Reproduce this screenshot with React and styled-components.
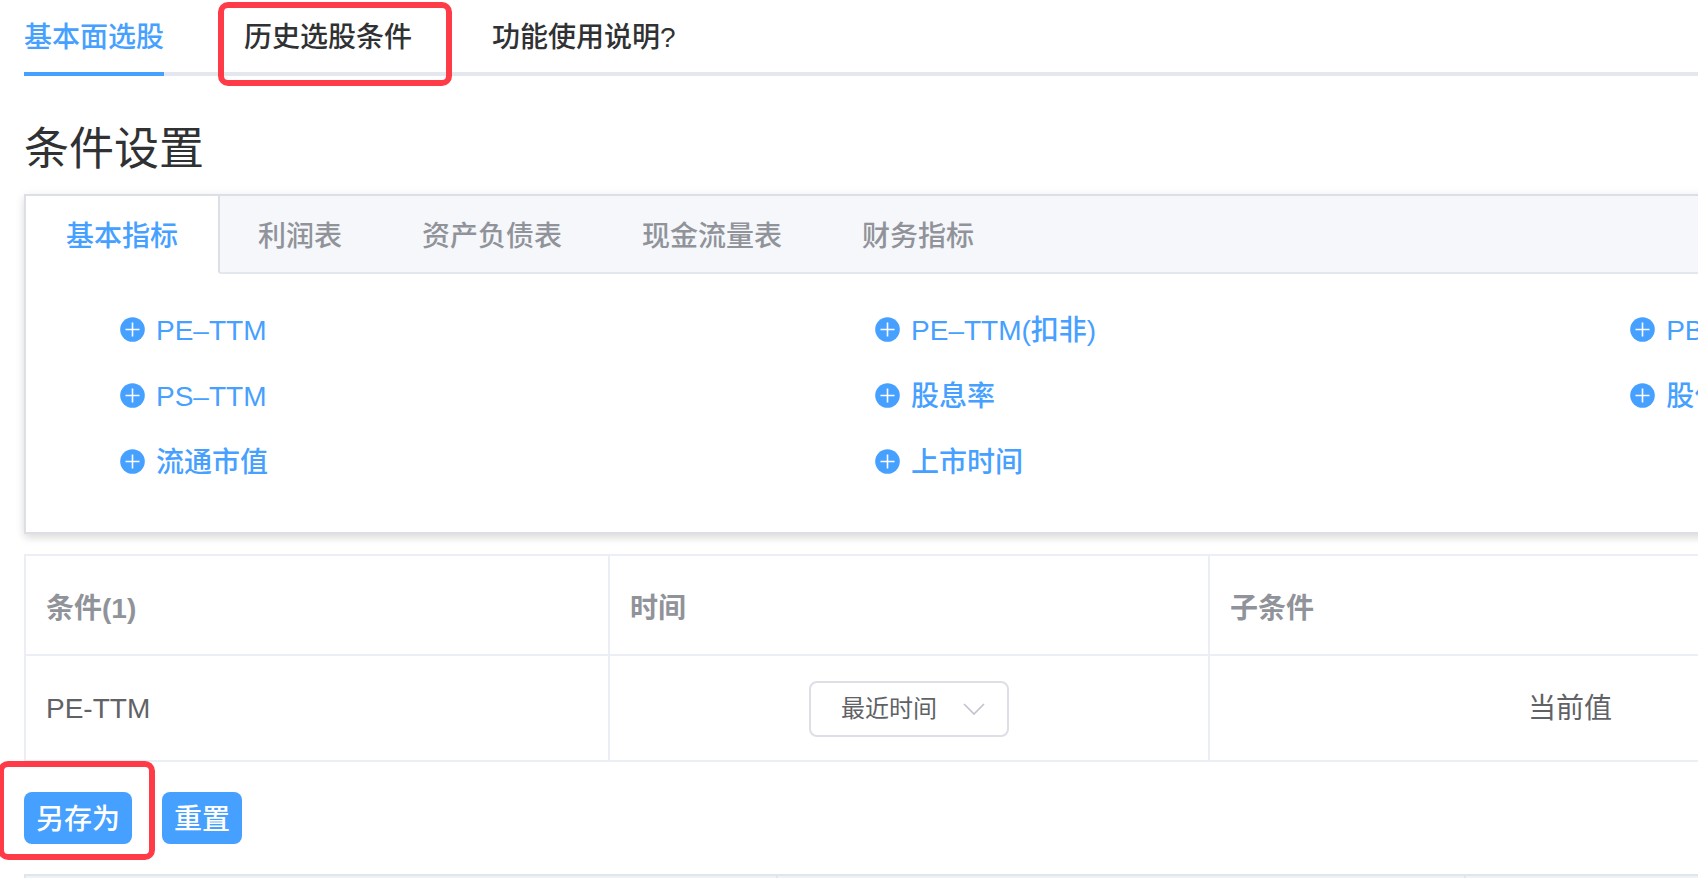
import React from "react";
import styled, { createGlobalStyle } from "styled-components";

const Global = createGlobalStyle`
  *, *::before, *::after { box-sizing: border-box; }
  body {
    margin: 0;
    background: #fff;
    color: #606266;
    font-family: "Liberation Sans", "Noto Sans CJK SC", sans-serif;
    font-size: 28px;
    line-height: 40px;
    overflow: hidden;
  }
  button, select { font: inherit; }
`;

const Viewport = styled.div`
  height: 100vh;
  overflow: hidden;
`;

const Page = styled.main`
  width: 140%;
  padding: 0 24px;
`;

const NavTabs = styled.nav`
  display: flex;
  gap: 80px;
  border-bottom: 4px solid #e4e7ed;
`;

const NavTab = styled.a`
  position: relative;
  padding: 18px 0 14px;
  color: ${(p) => (p.$active ? "#46a0ff" : "#303133")};
  font-weight: 500;
  text-decoration: none;
  border-bottom: 4px solid ${(p) => (p.$active ? "#46a0ff" : "transparent")};
  margin-bottom: -4px;
`;

const Highlight = styled.span`
  position: absolute;
  inset: ${(p) => p.$inset};
  border: 6px solid #ff3b47;
  border-radius: 10px;
  pointer-events: none;
`;

const Title = styled.h1`
  margin: 42px 0 12px;
  color: #303133;
  font-size: 45px;
  font-weight: 400;
  line-height: 64px;
`;

const Card = styled.section`
  border: 2px solid #dcdfe6;
  background: #fff;
  box-shadow: 0 4px 8px rgba(0, 0, 0, 0.12), 0 0 12px rgba(0, 0, 0, 0.04);
`;

const CardTabs = styled.div`
  display: flex;
  background: #f5f7fa;
  border-bottom: 2px solid #e4e7ed;
`;

const CardTab = styled.button`
  padding: 21px 40px 15px;
  border: 0;
  margin-bottom: -2px;
  background: ${(p) => (p.$active ? "#fff" : "transparent")};
  border-right: ${(p) => (p.$active ? "2px solid #dcdfe6" : "0")};
  border-bottom: 2px solid ${(p) => (p.$active ? "#fff" : "transparent")};
  color: ${(p) => (p.$active ? "#46a0ff" : "#909399")};
  font-weight: 500;
  margin-right: ${(p) => (p.$active ? "-2px" : "0")};
`;

const Indicators = styled.div`
  display: grid;
  grid-template-columns: repeat(3, 1fr);
  padding: 22px 30px 38px;
`;

const Indicator = styled.button`
  display: flex;
  align-items: center;
  gap: 11px;
  height: 66px;
  padding: 0 64px;
  border: 0;
  background: none;
  color: #46a0ff;
  font-weight: 500;
`;

const IndicatorLabel = styled.span`
  padding-top: 3px;
`;

const ConditionTable = styled.table`
  width: 100%;
  margin-top: 20px;
  table-layout: fixed;
  border-spacing: 0;
  border-top: 2px solid #ebeef5;
  border-left: 2px solid #ebeef5;
`;

const Col = styled.col`
  width: ${(p) => p.$width};
`;

const HeadCell = styled.th`
  height: 100px;
  padding: 8px 20px 0;
  border-right: 2px solid #ebeef5;
  border-bottom: 2px solid #ebeef5;
  color: #909399;
  font-weight: 700;
  text-align: left;
`;

const Cell = styled.td`
  height: 106px;
  padding: 2px 20px 0;
  border-right: 2px solid #ebeef5;
  border-bottom: 2px solid #ebeef5;
  text-align: ${(p) => p.$align || "left"};
`;

const SelectBox = styled.span`
  position: relative;
  display: inline-flex;
  align-items: center;
  vertical-align: middle;
`;

const Select = styled.select`
  appearance: none;
  width: 200px;
  height: 56px;
  padding: 0 60px 0 30px;
  border: 2px solid #dcdfe6;
  border-radius: 8px;
  background: #fff;
  color: #606266;
  font-size: 24px;
`;

const Chevron = styled.svg`
  position: absolute;
  right: 24px;
  pointer-events: none;
`;

const Actions = styled.div`
  display: flex;
  gap: 30px;
  padding: 30px 0;
`;

const ActionSlot = styled.div`
  position: relative;
`;

const ActionButton = styled.button`
  display: block;
  height: 52px;
  padding: 4px 12px 0;
  border: 0;
  border-radius: 8px;
  background: #46a0ff;
  color: #fff;
  font-weight: 500;
`;

const ResultTable = styled(ConditionTable)`
  margin-top: 0;
  border-color: #dfe6ec;
  background: #eef1f6;
`;

const ResultHead = styled(HeadCell)`
  border-color: #dfe6ec;
`;

const PlusCircle = () => (
  <svg width="25" height="25" viewBox="0 0 25 25" aria-hidden="true">
    <circle cx="12.5" cy="12.5" r="12.3" fill="#46a0ff" />
    <path d="M5.5 12.5h14M12.5 5.5v14" stroke="#fff" strokeWidth="1.6" />
  </svg>
);

const navTabs = ["基本面选股", "历史选股条件", "功能使用说明?"];
const cardTabs = ["基本指标", "利润表", "资产负债表", "现金流量表", "财务指标"];
const indicators = [
  "PE–TTM", "PE–TTM(扣非)", "PB",
  "PS–TTM", "股息率", "股价",
  "流通市值", "上市时间",
];

export default function App() {
  return (
    <Viewport>
      <Global />
      <Page>
        <NavTabs>
          {navTabs.map((label, i) => (
            <NavTab key={label} href="#" $active={i === 0}>
              {label}
              {i === 1 && <Highlight $inset="2px -40px -14px -26px" />}
            </NavTab>
          ))}
        </NavTabs>
        <Title>条件设置</Title>
        <Card>
          <CardTabs role="tablist">
            {cardTabs.map((label, i) => (
              <CardTab key={label} role="tab" aria-selected={i === 0} $active={i === 0}>
                {label}
              </CardTab>
            ))}
          </CardTabs>
          <Indicators>
            {indicators.map((label) => (
              <Indicator key={label}>
                <PlusCircle />
                <IndicatorLabel>{label}</IndicatorLabel>
              </Indicator>
            ))}
          </Indicators>
        </Card>
        <ConditionTable>
          <colgroup>
            <Col $width="584px" />
            <Col $width="600px" />
            <Col $width="722px" />
            <Col />
          </colgroup>
          <thead>
            <tr>
              <HeadCell>条件(1)</HeadCell>
              <HeadCell>时间</HeadCell>
              <HeadCell>子条件</HeadCell>
              <HeadCell />
            </tr>
          </thead>
          <tbody>
            <tr>
              <Cell>PE-TTM</Cell>
              <Cell $align="center">
                <SelectBox>
                  <Select aria-label="时间">
                    <option>最近时间</option>
                  </Select>
                  <Chevron width="22" height="12" viewBox="0 0 22 12" aria-hidden="true">
                    <path d="M1 1l10 10L21 1" fill="none" stroke="#c0c4cc" strokeWidth="1.7" />
                  </Chevron>
                </SelectBox>
              </Cell>
              <Cell $align="center">当前值</Cell>
              <Cell />
            </tr>
          </tbody>
        </ConditionTable>
        <Actions>
          <ActionSlot>
            <ActionButton>另存为</ActionButton>
            <Highlight $inset="-31px -23px -16px -26px" />
          </ActionSlot>
          <ActionButton>重置</ActionButton>
        </Actions>
        <ResultTable>
          <colgroup>
            <Col $width="752px" />
            <Col $width="688px" />
            <Col />
          </colgroup>
          <thead>
            <tr>
              <ResultHead />
              <ResultHead />
              <ResultHead />
            </tr>
          </thead>
        </ResultTable>
      </Page>
    </Viewport>
  );
}
